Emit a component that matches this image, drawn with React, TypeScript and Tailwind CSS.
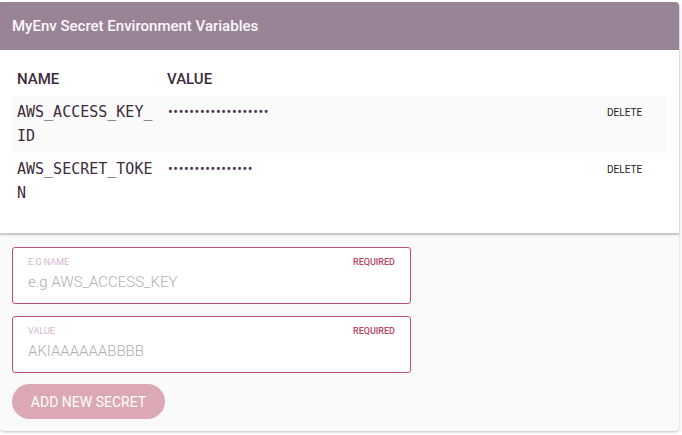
const secrets = [
  { name: 'AWS_ACCESS_KEY_ID', dots: 19 },
  { name: 'AWS_SECRET_TOKEN', dots: 16 },
];

function Field({ label, placeholder }: { label: string; placeholder: string }) {
  return (
    <div className="w-[399px] h-[57px] bg-white border border-[#c2506c] rounded-[3px] px-[15px] pt-[9px]">
      <div className="flex justify-between text-[9px] leading-[10px]">
        <span className="text-[#d5b6cf]">{label}</span>
        <span className="text-[#b8435f] font-medium">REQUIRED</span>
      </div>
      <div className="mt-[5px] text-[15px] leading-[20px] font-light text-[#b0b0b0]">{placeholder}</div>
    </div>
  );
}

export default function App() {
  return (
    <div className="bg-white min-h-[435px] pt-[2px] pr-[3px] font-['Roboto',sans-serif]">
      <div className="bg-[#fafafa] rounded-b-[4px] rounded-tr-[4px] shadow-[0_1px_3px_rgba(0,0,0,0.25)]">
        <div className="bg-white rounded-tr-[4px] shadow-[0_2px_2px_rgba(0,0,0,0.22)] pb-[23px]">
          <div className="bg-[#998497] h-[48px] flex items-center px-[12px] rounded-tr-[4px]">
            <h1 className="text-[15px] font-medium text-[#fbf7fb]">
              MyEnv Secret Environment Variables
            </h1>
          </div>
          <div className="px-[12px] pt-[18px]">
            <div className="flex h-[28px] text-[15px] font-medium text-[#3d2b3d]">
              <div className="w-[155px] pl-[5px]">NAME</div>
              <div>VALUE</div>
            </div>
            {secrets.map((s, i) => (
              <div
                key={s.name}
                className={`flex h-[57px] pt-[4px] ${i === 0 ? 'bg-[#fafafa]' : 'bg-white'}`}
              >
                <div className="w-[155px] pl-[5px] pr-[9px] font-['DejaVu_Sans_Mono',monospace] text-[15px] leading-[24px] text-[#3d2b3d] break-all">
                  {s.name}
                </div>
                <div className="flex-1 text-[14px] leading-[24px] text-[#4a3348] tracking-[0.6px] pl-[1px]">
                  {'•'.repeat(s.dots)}
                </div>
                <div className="w-[60px] text-[10px] leading-[26px] text-[#222]">DELETE</div>
              </div>
            ))}
          </div>
        </div>
        <div className="px-[12px] pt-[14px] pb-[12px] flex flex-col gap-[12px]">
          <Field label="E.G NAME" placeholder="e.g AWS_ACCESS_KEY" />
          <Field label="VALUE" placeholder="AKIAAAAAABBBB" />
          <button className="w-[153px] h-[35px] rounded-full bg-[#dca8b4] text-white text-[14px] leading-[20px] mt-[-1px]">
            ADD NEW SECRET
          </button>
        </div>
      </div>
    </div>
  );
}
